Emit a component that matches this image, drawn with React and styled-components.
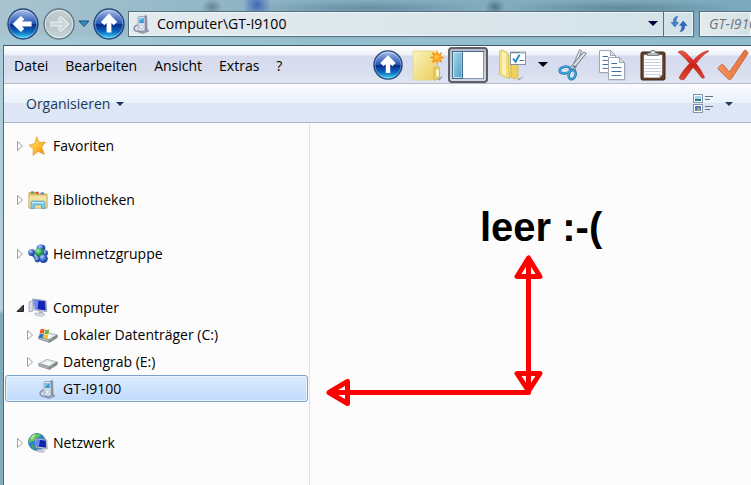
import React, { useState } from "react";
import styled, { createGlobalStyle, css } from "styled-components";

const OrbIcon = ({ size = 32, id, disabled, direction = "left" }) => {
  const angle = { left: 0, up: 90, right: 180 }[direction];
  return (
    <svg width={size} height={size} viewBox="0 0 32 32" aria-hidden="true">
      <defs>
        <linearGradient id={id} x1="0" y1="0" x2="0" y2="1">
          {disabled ? (
            <>
              <stop offset="0" stopColor="#c9d3d7" />
              <stop offset="0.5" stopColor="#b3c1c6" />
              <stop offset="1" stopColor="#c8d8de" />
            </>
          ) : (
            <>
              <stop offset="0" stopColor="#b4c6e8" />
              <stop offset="0.28" stopColor="#5c82ca" />
              <stop offset="0.49" stopColor="#2458b4" />
              <stop offset="0.52" stopColor="#062a86" />
              <stop offset="0.75" stopColor="#0c66c0" />
              <stop offset="1" stopColor="#45dcf8" />
            </>
          )}
        </linearGradient>
      </defs>
      <circle cx="16" cy="16" r="15" fill={`url(#${id})`} stroke={disabled ? "#5f7680" : "#24477c"} strokeWidth="1.4" />
      <circle cx="16" cy="16" r="13.8" fill="none" stroke="#fff" strokeOpacity={disabled ? 0.55 : 0.35} />
      <g transform={`rotate(${angle} 16 16)`} fill="none">
        <path d="M24.6 16 H9 M15.6 9.6 L9 16 L15.6 22.4" stroke={disabled ? "#edf2f3" : "#fff"} strokeWidth="4.8" />
        {disabled && <path d="M24 16 H10 M15 10.2 L9.4 16 L15 21.8" stroke="#ccd5d8" strokeWidth="2.8" />}
      </g>
    </svg>
  );
};

const Caret = ({ color = "#000", width = 10 }) => (
  <svg width={width} height={width / 2} viewBox="0 0 10 5" aria-hidden="true">
    <path d="M0 0 H10 L5 5 Z" fill={color} />
  </svg>
);

const HistoryIcon = () => (
  <svg width="12" height="8" viewBox="0 0 12 8" aria-hidden="true">
    <path d="M1 1 H11 L6 6.5 Z" fill="#2d8fc4" stroke="#1c4c7c" strokeLinejoin="round" />
  </svg>
);

const PhoneIcon = ({ size = 20 }) => (
  <svg width={size} height={size} viewBox="0 0 20 20" aria-hidden="true">
    <path d="M12 2 L14 1 L15 2 L15.5 16 L12 18 Z" fill="#8792a2" />
    <path d="M5.4 11 C1.6 12 1 16 4 17 L9 18.4" fill="none" stroke="#8990ae" strokeWidth="1.5" />
    <path d="M7 17 L14 15 L17 17 L10 19.6 Z" fill="#9da3b6" stroke="#69718a" strokeWidth="0.6" />
    <rect x="6" y="2.5" width="7" height="14.4" rx="1.6" fill="#e1e9f2" stroke="#8894a8" strokeWidth="0.8" />
    <rect x="7.2" y="4.2" width="4.6" height="5" fill="#369be0" />
    <path d="M7.2 4.2 H11.8 L7.2 7.2 Z" fill="#7cc7f3" />
    <circle cx="9.5" cy="12.8" r="1.8" fill="#fff" stroke="#9aa9bb" strokeWidth="0.8" />
  </svg>
);

const RefreshIcon = () => (
  <svg width="18" height="18" viewBox="0 0 18 18" aria-hidden="true">
    <path d="M8 1.600 C4.600 1.400 3.200 3.800 3.400 7.400 H1 L4.800 12 L8.600 7.400 H6.200 C6 4.800 6.400 3 8 1.600 Z" fill="#3f83cf" stroke="#2a62a8" strokeWidth="0.5" />
    <path d="M10 16.400 C13.400 16.600 14.800 14.200 14.600 10.600 H17 L13.200 6 L9.400 10.600 H11.800 C12 13.200 11.600 15 10 16.400 Z" fill="#2d6bbd" stroke="#204f94" strokeWidth="0.5" />
  </svg>
);

const NewFolderIcon = () => (
  <svg width="34" height="32" viewBox="0 0 34 32" aria-hidden="true">
    <defs>
      <linearGradient id="newFolder" x1="0" y1="0" x2="1" y2="1">
        <stop offset="0" stopColor="#fbf3bd" />
        <stop offset="1" stopColor="#e9d05f" />
      </linearGradient>
    </defs>
    <path d="M2 2 H24 V31 H2 Z" fill="url(#newFolder)" stroke="#e6d68a" strokeWidth="0.8" />
    <path d="M23 19 L27 17 L28.6 19 V28 L25 31 H23 Z" fill="#e9cf66" stroke="#c8a942" strokeWidth="0.7" />
    <path d="M25.6 20.5 H27.6 V27 L25.6 28 Z" fill="#fff" />
    <path d="M26 30.5 L32 26.5 L29 31.5 Z" fill="#9aa0aa" />
    <path
      d="M26 0.5 L27.2 5 L31.2 3 L29.5 7.2 L34 8.5 L29.5 9.8 L31.2 14 L27.2 12 L26 16.5 L24.8 12 L20.8 14 L22.5 9.8 L18 8.5 L22.5 7.2 L20.8 3 L24.8 5 Z"
      fill="#f28c0c"
    />
    <circle cx="26" cy="8.5" r="4" fill="#ffa91e" />
    <circle cx="25.6" cy="8" r="2" fill="#ffc648" />
  </svg>
);

const PaneIcon = () => (
  <svg width="32" height="28" viewBox="0 0 32 28" aria-hidden="true">
    <defs>
      <linearGradient id="pane" x1="0" y1="0" x2="1" y2="1">
        <stop offset="0" stopColor="#a6d6e8" />
        <stop offset="1" stopColor="#4f9fc4" />
      </linearGradient>
    </defs>
    <rect x="0.5" y="0.5" width="31" height="27" fill="#fff" stroke="#47698a" />
    <rect x="1.5" y="1.5" width="8.5" height="25" fill="url(#pane)" stroke="#b9e4f0" />
    <path d="M10.5 1 V27" stroke="#47698a" />
    <path d="M31.5 1 V27.5 H11" fill="none" stroke="#7b9cb5" />
  </svg>
);

const FolderOptionsIcon = () => (
  <svg width="28" height="32" viewBox="0 0 28 32" aria-hidden="true">
    <path d="M8 7 L14 5 V27 L9 29 Z" fill="#f2df86" stroke="#d9be58" strokeWidth="0.7" />
    <path d="M0.5 2 L3 1 L9 4 L10.5 30 L2 26 L0.5 25 Z" fill="#f5df7d" stroke="#d5b74c" strokeWidth="0.7" />
    <path d="M3 2.5 L7 5 V27 L3 25.5 Z" fill="#fdf2b4" />
    <path d="M12 16 L19 14 V28 L15 30 L12 28 Z" fill="#efd05c" stroke="#cfae43" strokeWidth="0.7" />
    <path d="M18 30 L25 27.500 L20 31.500 Z" fill="#a6a69b" />
    <rect x="11.5" y="3.5" width="15" height="12" fill="#fff" stroke="#8192a5" />
    <path d="M11 3.5 H27" stroke="#7489a0" strokeWidth="1.6" />
    <path d="M21 3.4 H26" stroke="#e4eaf0" strokeWidth="0.8" strokeDasharray="1 1" />
    <path d="M14 9.5 L16.6 12.8 L20.5 5.8" fill="none" stroke="#1c86cc" strokeWidth="1.8" />
    <path d="M20.5 11.5 H25" stroke="#536b82" />
  </svg>
);

const ScissorsIcon = () => (
  <svg width="30" height="32" viewBox="0 0 30 32" aria-hidden="true">
    <path d="M21.5 0.8 L23.4 1.8 L17 21 L14 19 Z" fill="#e4e9ee" stroke="#76828e" strokeWidth="0.9" />
    <path d="M28.4 4.4 L14.6 21 L12 18.8 L25.4 3 Z" fill="#c5cdd5" stroke="#667380" strokeWidth="0.9" />
    <path d="M27 4 L15 18" stroke="#fff" strokeWidth="0.8" />
    <ellipse cx="7" cy="21" rx="5.4" ry="3.4" transform="rotate(-12 7 21)" fill="none" stroke="#1979b6" strokeWidth="2.6" />
    <ellipse cx="14" cy="25.6" rx="3.4" ry="4.6" transform="rotate(18 14 26)" fill="none" stroke="#1979b6" strokeWidth="2.6" />
    <ellipse cx="7" cy="20.8" rx="5.3" ry="3.3" transform="rotate(-12 7 21)" fill="none" stroke="#59b0df" strokeWidth="1" />
    <ellipse cx="13.8" cy="25.6" rx="3.3" ry="4.5" transform="rotate(18 14 26)" fill="none" stroke="#59b0df" strokeWidth="1" />
    <circle cx="16.2" cy="17.6" r="1" fill="#4d5a66" />
  </svg>
);

const Sheet = ({ x, y }) => (
  <g transform={`translate(${x} ${y})`}>
    <path d="M1.5 1.5 H12 L17.5 7 V23.5 H1.5 Z" fill="#7c8795" opacity="0.35" />
    <path d="M0.5 0.5 H11.5 L16.5 5.5 V22.5 H0.5 Z" fill="#fff" stroke="#9da7b4" />
    <path d="M11.5 0.5 V5.5 H16.5 Z" fill="#dfe5eb" stroke="#9da7b4" />
    <path d="M3.5 6.5 H9 M3.5 14.5 H13.5" stroke="#3d6ea8" />
    <path d="M3.5 10.5 H13.5 M3.5 18.5 H13.5" stroke="#557fb0" />
  </g>
);

const CopyIcon = () => (
  <svg width="28" height="32" viewBox="0 0 28 32" aria-hidden="true">
    <Sheet x={0} y={1} />
    <Sheet x={9} y={8} />
  </svg>
);

const PasteIcon = () => (
  <svg width="26" height="32" viewBox="0 0 26 32" aria-hidden="true">
    <rect x="1" y="3" width="24" height="28" rx="1.6" fill="#623f26" stroke="#3c2617" />
    <path d="M4 6 H22 V26 L19.5 28.5 H4 Z" fill="#fff" stroke="#c9ced3" strokeWidth="0.6" />
    <path d="M5 10.5 H21 M5 13.5 H21 M5 16.5 H21 M5 19.5 H21 M5 22.5 H21 M5 25.5 H20" stroke="#c4d2de" />
    <path d="M22 26 H19.5 V28.5 Z" fill="#a6aeb8" />
    <path d="M7.5 6.5 V4 H10 C10.4 0.4 15.6 0.4 16 4 H18.5 V6.5 Z" fill="#b5bbc1" stroke="#676d73" strokeWidth="0.8" />
    <circle cx="13" cy="3.2" r="1" fill="#fff" />
  </svg>
);

const DeleteIcon = () => (
  <svg width="32" height="32" viewBox="0 0 32 32" aria-hidden="true">
    <defs>
      <linearGradient id="cross" x1="0" y1="0" x2="0" y2="1">
        <stop offset="0" stopColor="#ee5a4a" />
        <stop offset="0.5" stopColor="#cf1f16" />
        <stop offset="1" stopColor="#dc4a38" />
      </linearGradient>
    </defs>
    <path
      d="M1 3 C4 1 7 2 9 4 C12 7 14 9 16.4 11.6 C20 7 25 3 31 1.6 C31.6 1.8 31.4 2.4 31 2.8 C26 6 22 10 19 14.6 C22 18 25 23 27.4 28 C27.4 29.6 25.4 29.6 24 28 C21 24 18.6 21 16 18.4 C13 22 10 27 7.4 30.2 C5 31.4 2 30.4 2.4 28.2 C5 23 9 18.4 12.6 14.6 C9 10 5 6 1 3 Z"
      fill="url(#cross)"
      stroke="#a8281c"
      strokeWidth="0.6"
    />
  </svg>
);

const CheckIcon = () => (
  <svg width="32" height="32" viewBox="0 0 32 32" aria-hidden="true">
    <defs>
      <linearGradient id="check" x1="0" y1="0" x2="1" y2="0">
        <stop offset="0" stopColor="#f4915a" />
        <stop offset="1" stopColor="#e9703a" />
      </linearGradient>
    </defs>
    <path
      d="M1.4 18.6 L4.4 15.4 C5 15 5.8 15.2 6.2 15.8 L12.4 23 L27 1.8 C27.6 1 28.6 1 29.2 1.6 L30.8 3.4 C31 4 31 4.4 30.6 5 L14.6 29.6 C13.8 30.8 12 31 11 29.8 L1.4 20.4 C1 19.8 1 19.2 1.4 18.6 Z"
      fill="url(#check)"
      stroke="#b7623a"
      strokeWidth="0.8"
    />
  </svg>
);

const ViewIcon = () => (
  <svg width="20" height="20" viewBox="0 0 20 20" aria-hidden="true">
    <rect x="0.5" y="0.5" width="9" height="8" fill="#fff" stroke="#8496a9" />
    <rect x="2" y="2" width="6" height="3" fill="#9fd3ef" />
    <rect x="2" y="5" width="6" height="2" fill="#2c7f8e" />
    <rect x="0.5" y="10.5" width="9" height="8" fill="#fff" stroke="#8496a9" />
    <rect x="2" y="12" width="6" height="5" fill="#5c73c8" />
    <rect x="4" y="14" width="3" height="3" fill="#8bbf3b" />
    <path d="M12 2.5 H20 M12 5.5 H17 M12 12.5 H20 M12 15.5 H17" stroke="#5f7289" />
  </svg>
);

const StarIcon = () => (
  <svg width="20" height="20" viewBox="0 0 20 20" aria-hidden="true">
    <defs>
      <linearGradient id="star" x1="0" y1="0" x2="1" y2="1">
        <stop offset="0" stopColor="#ffe793" />
        <stop offset="0.5" stopColor="#fdc335" />
        <stop offset="1" stopColor="#ee7f12" />
      </linearGradient>
    </defs>
    <path
      d="M8.6 0.8 L11.4 6.6 L17.6 6 L13.6 11 L16.4 18.4 L10.2 15.4 L5 19.4 L5.4 13 L1 9.2 L7 7.4 Z"
      fill="url(#star)"
      stroke="#e99a35"
      strokeWidth="0.8"
      strokeLinejoin="round"
    />
  </svg>
);

const LibraryIcon = () => (
  <svg width="20" height="20" viewBox="0 0 20 20" aria-hidden="true">
    <path d="M1 2.5 H7 L8 4 H19 V18 H1 Z" fill="#e0c36b" stroke="#bfa14c" strokeWidth="0.7" />
    <rect x="3" y="1.4" width="3" height="2" fill="#3aa552" />
    <rect x="7.4" y="1.8" width="3.4" height="2" fill="#d8503d" />
    <rect x="12.6" y="2.4" width="3.4" height="2" fill="#4a86cf" />
    <path d="M1 5 H19 V18 H1 Z" fill="#f4e3a0" stroke="#c9ab58" strokeWidth="0.7" />
    <path d="M3 18.6 V12.6 C3 11.4 4 11 5 11 H15 C16 11 17 11.6 17 12.6 V18.6 H13.6 V15 H6.4 V18.6 Z" fill="#83c8e6" stroke="#4a98bf" strokeWidth="0.7" />
    <path d="M4 12.6 H16" stroke="#d4f0fb" />
  </svg>
);

const HomegroupIcon = () => (
  <svg width="20" height="20" viewBox="0 0 20 20" aria-hidden="true">
    <defs>
      <radialGradient id="ballBlue" cx="0.35" cy="0.3" r="0.8">
        <stop offset="0" stopColor="#b3d2fa" />
        <stop offset="0.5" stopColor="#3565c6" />
        <stop offset="1" stopColor="#142f84" />
      </radialGradient>
      <radialGradient id="ballGreen" cx="0.35" cy="0.3" r="0.8">
        <stop offset="0" stopColor="#a9eeb7" />
        <stop offset="0.5" stopColor="#27a04f" />
        <stop offset="1" stopColor="#0c6733" />
      </radialGradient>
    </defs>
    <ellipse cx="13" cy="4" rx="4.400" ry="3.400" fill="url(#ballBlue)" />
    <path d="M4 10 L8.600 15.600" stroke="#4f78c6" strokeWidth="2.600" />
    <circle cx="3.600" cy="8.600" r="3.500" fill="url(#ballBlue)" />
    <circle cx="17" cy="9" r="3" fill="url(#ballBlue)" />
    <circle cx="11.400" cy="8.600" r="4.600" fill="url(#ballGreen)" />
    <circle cx="15.400" cy="14.600" r="4.400" fill="url(#ballBlue)" />
    <circle cx="9.400" cy="15.400" r="2.800" fill="url(#ballBlue)" />
  </svg>
);

const ComputerIcon = () => (
  <svg width="20" height="20" viewBox="0 0 20 20" aria-hidden="true">
    <path d="M1 4 L5 2.4 V13 L1 14 Z" fill="#d5dbe2" stroke="#8e99a6" strokeWidth="0.7" />
    <path d="M4.600 1 L18 2.600 L18.800 13.600 L6.400 12 Z" fill="#dfe5ec" stroke="#8c97a8" strokeWidth="0.8" />
    <path d="M5.600 1.800 L17.200 3.200 L17.800 12.400 L7.200 11 Z" fill="#1523b4" />
    <path d="M5.600 1.800 L10.400 2.400 L9.600 11.300 L7.200 11 Z" fill="#6d8ef0" />
    <path d="M11 13 L15 13.6 L15.6 15.6 L10.6 15 Z" fill="#b2bac4" />
    <path d="M7 15 L17 16 L15 18.4 L7 16.8 Z" fill="#e2e6ea" stroke="#9ea7b1" strokeWidth="0.7" />
  </svg>
);

const Drive = () => (
  <>
    <path d="M0.8 11.6 L9 7.4 L19.2 10 L11.4 14.8 Z" fill="#e6e8ea" stroke="#969ca2" strokeWidth="0.7" />
    <path d="M0.8 11.6 L11.4 14.8 V17.4 L0.8 14 Z" fill="#aeb3b8" stroke="#858b91" strokeWidth="0.7" />
    <path d="M11.4 14.8 L19.2 10 V12.6 L11.4 17.4 Z" fill="#7f858b" stroke="#747a80" strokeWidth="0.7" />
    <path d="M5.6 11.4 L9.4 9.4 L14 10.6 L10.6 12.8 Z" fill="#f9fafb" />
    <path d="M13 15.1 L15 13.9" stroke="#6fdc6a" strokeWidth="1.1" />
  </>
);

const DriveIcon = () => (
  <svg width="20" height="20" viewBox="0 0 20 20" aria-hidden="true">
    <Drive />
  </svg>
);

const SystemDriveIcon = () => (
  <svg width="20" height="20" viewBox="0 0 20 20" aria-hidden="true">
    <Drive />
    <path d="M2.4 4.4 C4 3.4 5.4 3.8 6.6 4.4 L5.8 8.6 C4.4 8 3 8 1.6 8.8 Z" fill="#ea5a2b" />
    <path d="M7.2 4.6 C8.6 5.2 10 5 11.4 4.2 L10.6 8.4 C9.2 9.2 7.8 9.2 6.4 8.8 Z" fill="#72b83a" />
    <path d="M1.4 9.4 C3 8.6 4.4 8.8 5.6 9.2 L4.8 13.2 C3.4 12.6 2 12.8 0.6 13.4 Z" fill="#2d72c8" />
    <path d="M6.2 9.4 C7.6 10 9 9.8 10.4 9 L9.6 13 C8.2 13.8 6.8 13.8 5.4 13.4 Z" fill="#f7bf2a" />
  </svg>
);

const NetworkIcon = () => (
  <svg width="20" height="20" viewBox="0 0 20 20" aria-hidden="true">
    <circle cx="9" cy="9" r="8.5" fill="#2a84cc" stroke="#1f649a" strokeWidth="0.7" />
    <path d="M2 5 C5 0.4 10 0 13 2 C11 4.6 8 4 7 7 C5 9 3 8 1 10 C0.6 8 1 6.4 2 5 Z" fill="#6cc552" />
    <path d="M3 12 C5 11 7 13 6.4 16.6 C4.6 16 3 14 3 12 Z" fill="#4ba643" />
    <path d="M2.4 4.4 C4 2 6 1.2 8 1.2 L4 7 Z" fill="#c6efc0" opacity="0.7" />
    <path d="M7 5.400 L18.6 6.800 L19.200 16 L8 14.600 Z" fill="#dfe5ec" stroke="#8792a3" strokeWidth="0.8" />
    <path d="M7.800 6.400 L17.800 7.600 L18.200 14.800 L8.800 13.600 Z" fill="#1323ac" />
    <path d="M7.800 6.400 L12 6.900 L10.800 13.850 L8.800 13.600 Z" fill="#6688ec" />
    <path d="M9 16.6 L17 17.4 L15.4 19.4 L9 18.4 Z" fill="#dde2e7" stroke="#98a2ad" strokeWidth="0.7" />
  </svg>
);

const Expander = ({ open }) => (
  <svg width="10" height="12" viewBox="0 0 10 12" aria-hidden="true">
    {open ? (
      <path d="M8.5 3 V9.5 H2 Z" fill="#404040" stroke="#262626" strokeLinejoin="round" />
    ) : (
      <path d="M2.5 1.5 L7.5 6 L2.5 10.5 Z" fill="#fff" stroke="#a0a0a0" />
    )}
  </svg>
);

const RedArrows = () => (
  <svg width="230" height="160" viewBox="0 0 230 160" aria-hidden="true">
    <g fill="none" stroke="#f00" strokeWidth="5" strokeLinejoin="round" strokeLinecap="round">
      <path d="M208.5 8 V141.5 H12" />
      <path d="M208.5 7 L197 25.5 H220 Z" />
      <path d="M197 122.5 H220 L208.5 140 Z" />
      <path d="M9 141.5 L27.5 130.5 V152.5 Z" />
    </g>
  </svg>
);

const menus = ["Datei", "Bearbeiten", "Ansicht", "Extras", "?"];

const groups = [
  { label: "Favoriten", icon: <StarIcon /> },
  { label: "Bibliotheken", icon: <LibraryIcon /> },
  { label: "Heimnetzgruppe", icon: <HomegroupIcon /> },
  {
    label: "Computer",
    icon: <ComputerIcon />,
    open: true,
    items: [
      { label: "Lokaler Datenträger (C:)", icon: <SystemDriveIcon />, expandable: true },
      { label: "Datengrab (E:)", icon: <DriveIcon />, expandable: true },
      { label: "GT-I9100", icon: <PhoneIcon /> },
    ],
  },
  { label: "Netzwerk", icon: <NetworkIcon /> },
];

const App = () => {
  const [selected, setSelected] = useState("GT-I9100");
  const [pane, setPane] = useState(true);

  return (
    <>
      <GlobalStyle />
      <Frame>
        <TitleBar>
          <NavButtons>
            <Orb aria-label="Zurück"><OrbIcon id="back" /></Orb>
            <Orb aria-label="Vorwärts"><OrbIcon id="forward" direction="right" disabled /></Orb>
            <History aria-label="Verlauf"><HistoryIcon /></History>
            <Orb aria-label="Nach oben"><OrbIcon id="up" direction="up" /></Orb>
          </NavButtons>
          <AddressBar>
            <PhoneIcon />
            <AddressInput aria-label="Adresse" defaultValue={"Computer\\GT-I9100"} />
            <AddressButton aria-label="Vorherige Orte"><Caret color="#00003c" /></AddressButton>
            <AddressButton $divided aria-label="Aktualisieren"><RefreshIcon /></AddressButton>
          </AddressBar>
          <SearchBar>
            <SearchInput aria-label="Suchen" placeholder="GT-I9100 durchsuchen" />
          </SearchBar>
        </TitleBar>

        <Client>
          <MenuBar>
            <Menus>
              {menus.map((menu) => (
                <MenuButton key={menu}>{menu}</MenuButton>
              ))}
            </Menus>
            <Tools>
              <ToolGroup>
                <Tool aria-label="Aufwärts"><OrbIcon id="toolUp" direction="up" size={30} /></Tool>
                <Tool aria-label="Neuer Ordner"><NewFolderIcon /></Tool>
                <Tool $pressed={pane} aria-label="Navigationsbereich" onClick={() => setPane(!pane)}>
                  <PaneIcon />
                </Tool>
              </ToolGroup>
              <ToolGroup>
                <Tool aria-label="Ordneroptionen"><FolderOptionsIcon /></Tool>
                <Tool $narrow aria-label="Weitere Optionen"><Caret /></Tool>
                <Tool aria-label="Ausschneiden"><ScissorsIcon /></Tool>
                <Tool aria-label="Kopieren"><CopyIcon /></Tool>
                <Tool aria-label="Einfügen"><PasteIcon /></Tool>
                <Tool aria-label="Löschen"><DeleteIcon /></Tool>
                <Tool aria-label="Eigenschaften"><CheckIcon /></Tool>
              </ToolGroup>
            </Tools>
          </MenuBar>

          <CommandBar>
            <CommandButton>
              Organisieren
              <Caret color="#1e395b" width={8} />
            </CommandButton>
            <CommandButton aria-label="Ansicht ändern">
              <ViewIcon />
              <ViewCaret><Caret color="#1e395b" width={8} /></ViewCaret>
            </CommandButton>
          </CommandBar>

          <Body>
            {pane && (
              <Sidebar>
                {groups.map((group) => (
                  <Group key={group.label}>
                    <Row $selected={selected === group.label} onClick={() => setSelected(group.label)}>
                      <Expander open={group.open} />
                      <RowIcon>{group.icon}</RowIcon>
                      <RowLabel>{group.label}</RowLabel>
                    </Row>
                    {group.items?.map((item) => (
                      <Row
                        key={item.label}
                        $nested
                        $selected={selected === item.label}
                        onClick={() => setSelected(item.label)}
                      >
                        {item.expandable ? <Expander /> : <ExpanderSpace />}
                        <RowIcon>{item.icon}</RowIcon>
                        <RowLabel>{item.label}</RowLabel>
                      </Row>
                    ))}
                  </Group>
                ))}
              </Sidebar>
            )}
            <Content>
              <NoteText>leer :-(</NoteText>
              <RedArrows />
            </Content>
          </Body>
        </Client>
      </Frame>
    </>
  );
};

export default App;

const GlobalStyle = createGlobalStyle`
  * {
    box-sizing: border-box;
  }

  body {
    margin: 0;
    overflow: hidden;
    font-family: "Open Sans", "Noto Sans", sans-serif;
    font-size: 14px;
    line-height: 20px;
    color: #000;
  }

  button,
  input {
    margin: 0;
    padding: 0;
    border: none;
    background: none;
    font: inherit;
    color: inherit;
  }

  svg {
    display: block;
    flex: none;
  }
`;

const Frame = styled.div`
  display: flex;
  flex-direction: column;
  min-height: 100vh;
  padding-left: 3px;
  background:
    radial-gradient(ellipse 10px 8px at 212px 7px, rgba(70, 96, 112, 0.6), transparent),
    radial-gradient(ellipse 14px 14px at 257px 5px, rgba(40, 76, 180, 0.75), transparent),
    radial-gradient(ellipse 120px 8px at 370px 8px, rgba(72, 106, 124, 0.45), transparent),
    radial-gradient(ellipse 10px 8px at 495px 7px, rgba(50, 80, 96, 0.6), transparent),
    radial-gradient(ellipse 120px 8px at 620px 8px, rgba(64, 98, 116, 0.45), transparent),
    linear-gradient(to bottom, transparent 34px, rgba(166, 208, 220, 0.5) 40px) top / 100% 45px no-repeat,
    linear-gradient(to right, #a9c4cf 0, #97bac9 160px, #86afc1 320px, #7ca9bd 100%) top / 100% 45px no-repeat,
    linear-gradient(to bottom, #a8c8d5 0, #b4d3df 310px, #7fabbd 314px, #86aebf 100%);
`;

const TitleBar = styled.header`
  display: flex;
  align-items: center;
  height: 45px;
  padding: 2px 0 0 4px;
`;

const NavButtons = styled.div`
  display: flex;
  align-items: center;
  flex: none;
  width: 121px;
  height: 34px;
`;

const Orb = styled.button`
  flex: none;
  width: 32px;
  height: 32px;

  & + & {
    margin-left: 4px;
  }
`;

const History = styled.button`
  display: flex;
  justify-content: center;
  flex: none;
  width: 18px;
`;

const field = css`
  display: flex;
  align-items: center;
  height: 26px;
  border: 1px solid #54707e;
  box-shadow: inset 0 0 0 1px #eef5f8;
  background: linear-gradient(to right, #e4ebee, #d3e2e8);
`;

const AddressBar = styled.div`
  ${field}
  flex: 1 0 auto;
  padding-left: 3px;
`;

const AddressInput = styled.input`
  flex: 1;
  min-width: 0;
  padding-left: 5px;
  outline: none;
`;

const AddressButton = styled.button`
  display: flex;
  align-items: center;
  justify-content: center;
  width: ${(props) => (props.$divided ? "30px" : "20px")};
  height: 24px;
  border-left: ${(props) => (props.$divided ? "1px solid #54707e" : "none")};
`;

const SearchBar = styled.div`
  ${field}
  flex: 0 0 52px;
  margin-left: 5px;
  padding-left: 9px;
  border-right: none;
`;

const SearchInput = styled.input`
  width: 100%;
  font-style: italic;
  outline: none;

  &::placeholder {
    color: #6c7478;
    opacity: 1;
  }
`;

const Client = styled.div`
  display: flex;
  flex-direction: column;
  flex: 1;
  border-top: 1px solid #3d5866;
  border-left: 1px solid #4f6b79;
  background-color: #fcfcfc;
`;

const MenuBar = styled.div`
  display: flex;
  align-items: center;
  height: 38px;
  border-bottom: 1px solid #b4bccb;
  background: linear-gradient(to bottom, #fff 0, #eef1f9 9px, #d5daed 10px, #d9deef 70%, #e0e5f2 100%);
`;

const Menus = styled.nav`
  display: flex;
  gap: 17px;
  flex: 0 0 364px;
  padding: 2px 0 0 10px;
`;

const MenuButton = styled.button`
  white-space: nowrap;
`;

const Tools = styled.div`
  display: flex;
  flex: none;
  gap: 5px;
`;

const ToolGroup = styled.div`
  display: flex;
`;

const Tool = styled.button`
  display: flex;
  align-items: center;
  justify-content: center;
  flex: none;
  width: ${(props) => (props.$narrow ? "20px" : "40px")};
  height: 36px;

  ${(props) =>
    props.$pressed &&
    css`
      border: 2px solid #5c5f68;
      border-radius: 4px;
      background: linear-gradient(to bottom, #b9bcc8, #d3d6e2);
    `}
`;

const CommandBar = styled.div`
  display: flex;
  align-items: center;
  justify-content: space-between;
  height: 39px;
  padding: 2px 18px 0 22px;
  border-bottom: 1px solid #a9b7c8;
  background: linear-gradient(to bottom, #fafcff 0, #e9f2fb 50%, #dce6f4 51%, #dde7f5 100%);
  color: #1e395b;
`;

const CommandButton = styled.button`
  display: flex;
  align-items: center;
  gap: 6px;
`;

const ViewCaret = styled.span`
  padding-left: 6px;
`;

const Body = styled.div`
  display: flex;
  flex: 1;
`;

const Sidebar = styled.aside`
  flex: 0 0 306px;
  padding: 9px 1px 0;
  border-right: 1px solid #d6e5f0;
`;

const Group = styled.div`
  margin-bottom: 27px;
`;

const Row = styled.button`
  display: flex;
  align-items: center;
  width: 100%;
  height: 27px;
  padding-left: ${(props) => (props.$nested ? "19px" : "9px")};
  border: 1px solid transparent;
  border-radius: 3px;

  ${(props) =>
    props.$selected &&
    css`
      border-color: #7da2ce;
      box-shadow: inset 0 0 0 1px #ebf4fd;
      background: linear-gradient(to bottom, #dcebfc, #c1dbfc);
    `}
`;

const RowIcon = styled.span`
  padding: 0 5px 0 3px;
`;

const RowLabel = styled.span`
  white-space: nowrap;
`;

const ExpanderSpace = styled.span`
  width: 10px;
`;

const Content = styled.main`
  flex: 1;
  padding: 80px 0 0 10px;
`;

const NoteText = styled.p`
  margin: 0;
  padding-left: 160px;
  font-family: "Liberation Sans", Arial, sans-serif;
  font-size: 40px;
  font-weight: 700;
  line-height: 48px;
`;
